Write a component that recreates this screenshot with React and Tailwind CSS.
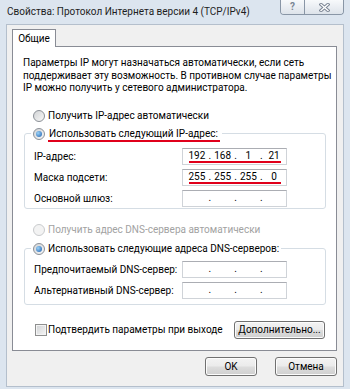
import { Fragment } from "react";

const font = "font-['Roboto','Open_Sans',sans-serif]";

function Radio({ checked, disabled }) {
  return (
    <span
      className={`flex h-[12px] w-[12px] shrink-0 items-center justify-center rounded-full border ${
        disabled
          ? "border-[#c9cbcd] bg-[#f3f3f3]"
          : "border-[#8b9097] bg-[linear-gradient(135deg,#d2d4d6,#f7f7f7)]"
      }`}
    >
      {checked && (
        <span className="h-[6px] w-[6px] rounded-full bg-[radial-gradient(circle_at_35%_35%,#9ad2f7,#1f5fae)]" />
      )}
    </span>
  );
}

function IpField({ parts = ["", "", "", ""], marked }) {
  return (
    <div className="relative flex h-[17px] w-[105px] items-center border border-[#cfd3d8] border-t-[#abadb3] bg-white pl-[2px] text-[10px] leading-none">
      {parts.map((p, i) => (
        <Fragment key={i}>
          {i > 0 && <span className="flex w-[2px] justify-center">.</span>}
          <span className="w-[24px] text-center">{p}</span>
        </Fragment>
      ))}
      {marked && <div className="absolute bottom-[1px] left-[6px] right-[5px] h-[2px] bg-[#e0001b]" />}
    </div>
  );
}

function Row({ label, children, last }) {
  return (
    <div className={`flex items-center ${last ? "" : "mb-[4px]"}`}>
      <span className="w-[148px] shrink-0 whitespace-nowrap">{label}</span>
      {children}
    </div>
  );
}

function Button({ children, className = "" }) {
  return (
    <button
      className={`flex items-center justify-center rounded-[3px] border border-[#707070] bg-[linear-gradient(#f3f3f3_0%,#ebebeb_48%,#dddddd_52%,#cfcfcf_100%)] text-[10px] text-black shadow-[inset_0_0_0_1px_#fcfcfc] ${className}`}
    >
      {children}
    </button>
  );
}

export default function App() {
  return (
    <div
      className={`flex h-[389px] w-[350px] flex-col overflow-hidden bg-[#dce5ef] text-[10px] text-black ${font}`}
    >
      {/* title bar */}
      <div className="flex h-[24px] shrink-0 items-start justify-between">
        <span className="ml-[7px] mt-[5px] whitespace-nowrap text-[10px] leading-[14px] text-[#1e1e1e]">
          Свойства: Протокол Интернета версии 4 (TCP/IPv4)
        </span>
        <div className="mr-[6px] flex h-[15px] overflow-hidden rounded-b-[4px] border border-t-0 border-[#8996a6]">
          <div className="flex w-[24px] items-center justify-center border-r border-[#8996a6] bg-[linear-gradient(#f7f9fb,#dde3ea)] text-[10px] font-bold leading-none text-[#7a8594]">
            ?
          </div>
          <div className="flex w-[38px] items-center justify-center bg-[linear-gradient(#f7f9fb,#dde3ea)]">
            <svg width="11" height="9" viewBox="0 0 11 9">
              <path d="M2 1.5 L9 7.5 M9 1.5 L2 7.5" stroke="#7d8796" strokeWidth="3.4" strokeLinecap="square" />
              <path d="M2 1.5 L9 7.5 M9 1.5 L2 7.5" stroke="#ffffff" strokeWidth="1.3" strokeLinecap="square" />
            </svg>
          </div>
        </div>
      </div>

      {/* client area */}
      <div className="mx-[6px] flex h-[363px] flex-col border border-[#b4bfcc] bg-[#f0f0f0]">
        <div className="ml-[5px] mt-[4px] flex">
          <div className="relative z-10 -mb-px flex h-[18px] w-[44px] items-center justify-center border border-b-0 border-[#898c95] bg-white leading-none">
            Общие
          </div>
        </div>

        <div className="ml-[5px] mr-[6px] flex h-[305px] flex-col border border-[#898c95] bg-white">
          <p className="whitespace-nowrap pl-[10px] pt-[10px] leading-[12.5px]">
            Параметры IP могут назначаться автоматически, если сеть
            <br />
            поддерживает эту возможность. В противном случае параметры
            <br />
            IP можно получить у сетевого администратора.
          </p>

          <div className="ml-[20px] mt-[15px] flex h-[13px] items-center gap-[3px] leading-none">
            <Radio />
            <span>Получить IP-адрес автоматически</span>
          </div>

          <fieldset className="ml-[11px] mr-[10px] mt-[4px] rounded-[3px] border border-[#d5dde4] px-[9px] pb-[1px] pt-[7px]">
            <legend className="ml-[-3px] flex h-[14px] items-center gap-[3px] px-[2px] leading-none">
              <Radio checked />
              <span className="border-b-2 border-[#e0001b] pb-[1px] pl-[1px] pr-[2px] pt-[3px]">
                Использовать следующий IP-адрес:
              </span>
            </legend>
            <Row label="IP-адрес:">
              <IpField parts={["192", "168", "1", "21"]} marked />
            </Row>
            <Row label="Маска подсети:">
              <IpField parts={["255", "255", "255", "0"]} marked />
            </Row>
            <Row label="Основной шлюз:" last>
              <IpField />
            </Row>
          </fieldset>

          <div className="ml-[20px] mt-[14px] flex h-[14px] items-center gap-[3px] leading-none text-[#a2a2a2]">
            <Radio disabled />
            <span>Получить адрес DNS-сервера автоматически</span>
          </div>

          <fieldset className="ml-[11px] mr-[10px] mt-[5px] rounded-[3px] border border-[#d5dde4] px-[9px] pb-[5px] pt-[5px]">
            <legend className="ml-[-3px] flex h-[14px] items-center gap-[3px] px-[2px] leading-none">
              <Radio checked />
              <span>Использовать следующие адреса DNS-серверов:</span>
            </legend>
            <Row label="Предпочитаемый DNS-сервер:">
              <IpField />
            </Row>
            <Row label="Альтернативный DNS-сервер:" last>
              <IpField />
            </Row>
          </fieldset>

          <div className="ml-[22px] mr-[11px] mt-[16px] flex items-center justify-between">
            <div className="flex items-center gap-[1px]">
              <span className="h-[12px] w-[12px] border border-[#8e8f8f] bg-[linear-gradient(135deg,#d0d2d4,#f6f6f6)] shadow-[inset_0_0_0_1px_#f4f4f4]" />
              <span>Подтвердить параметры при выходе</span>
            </div>
            <Button className="h-[18px] w-[91px]">Дополнительно...</Button>
          </div>
        </div>

        <div className="mr-[6px] mt-[6px] flex justify-end gap-[18px]">
          <Button className="h-[19px] w-[52px]">OK</Button>
          <Button className="h-[19px] w-[62px]">Отмена</Button>
        </div>
      </div>
    </div>
  );
}
